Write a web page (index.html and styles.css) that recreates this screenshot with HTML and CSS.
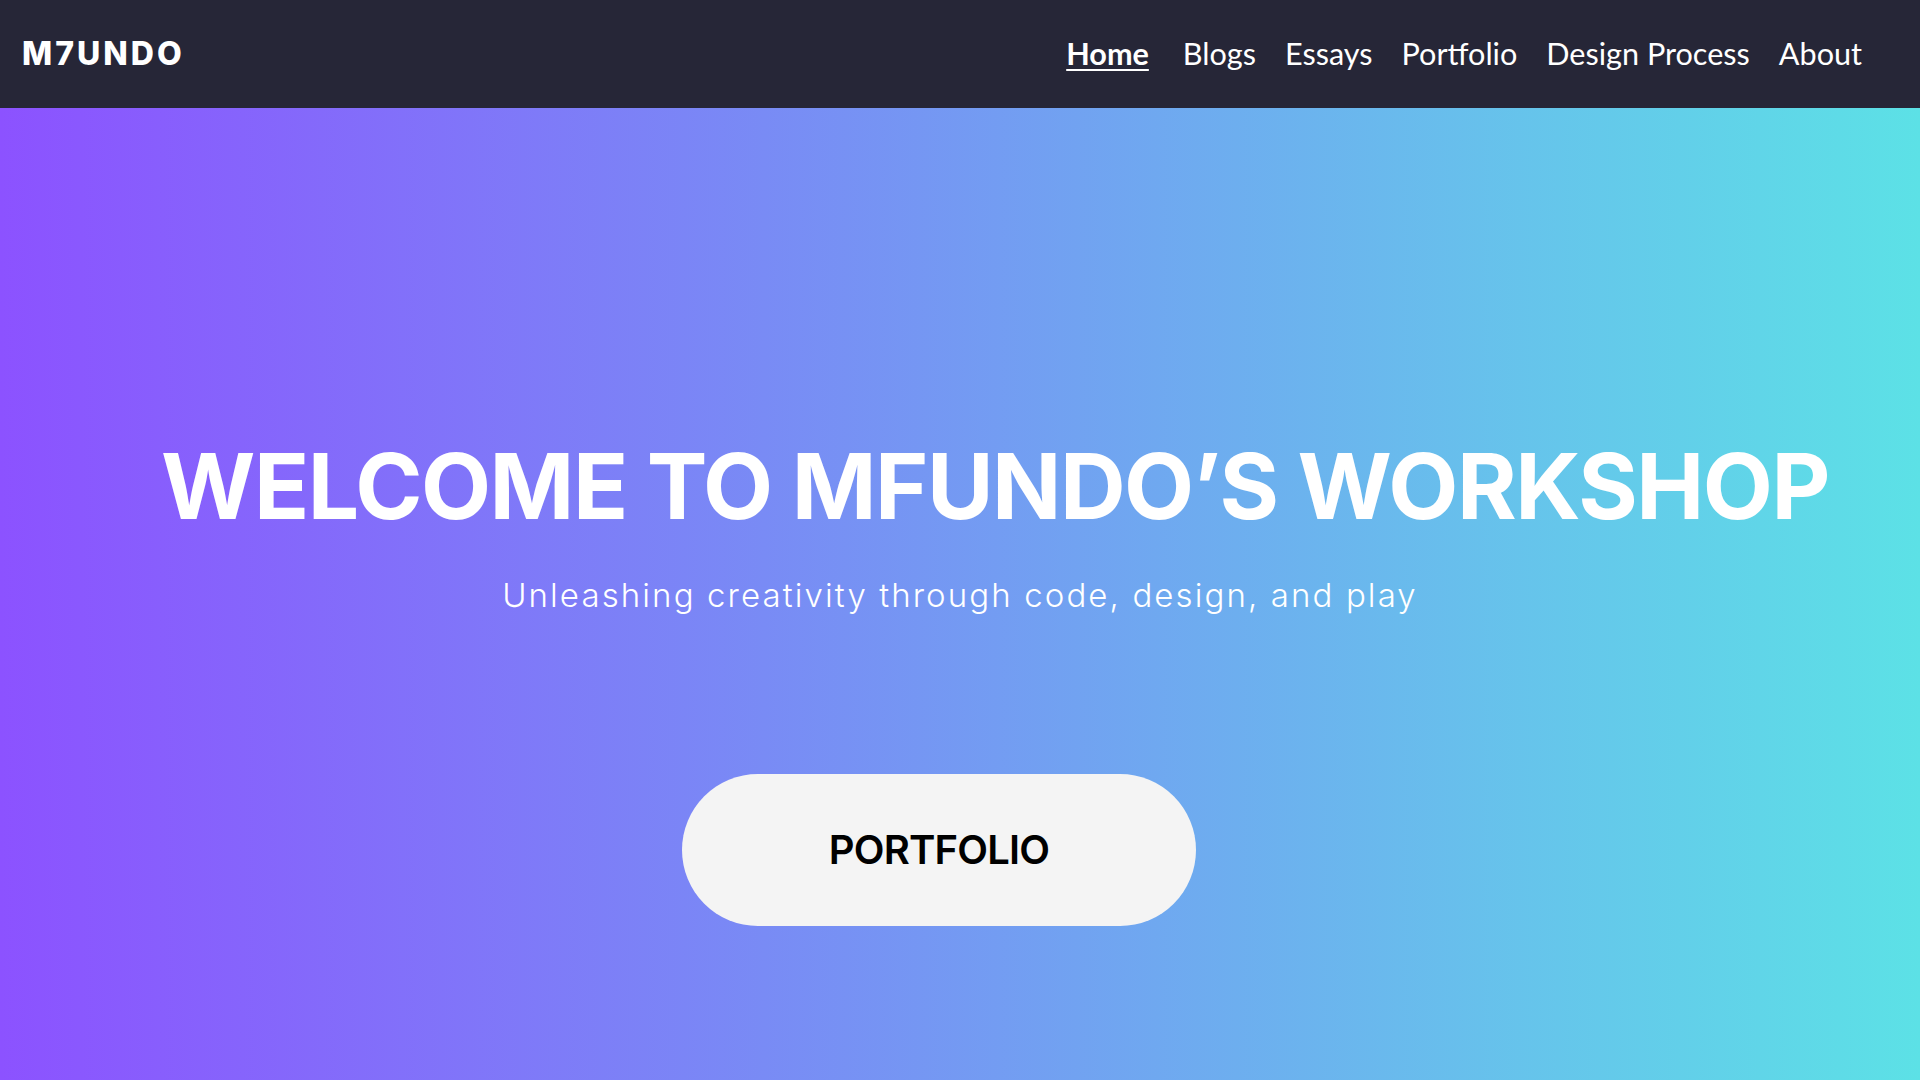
FILE: index.html
```html
<!DOCTYPE html>
<html lang="en">
<head>
<meta charset="utf-8">
<title>M7UNDO</title>
<link rel="stylesheet" href="styles.css">
</head>
<body>
<header class="topbar">
  <a class="logo" href="#">M7UNDO</a>
  <nav class="menu">
    <a class="menu-link active" href="#">Home</a>
    <a class="menu-link" href="#">Blogs</a>
    <a class="menu-link" href="#">Essays</a>
    <a class="menu-link" href="#">Portfolio</a>
    <a class="menu-link" href="#">Design Process</a>
    <a class="menu-link" href="#">About</a>
  </nav>
</header>
<main class="hero">
  <h1 class="hero-title">WELCOME TO MFUNDO’S WORKSHOP</h1>
  <p class="hero-sub">Unleashing creativity through code, design, and play</p>
  <a class="hero-btn" href="#">PORTFOLIO</a>
</main>
</body>
</html>
```
FILE: styles.css
```css
* { box-sizing: border-box; }
html, body { margin: 0; padding: 0; }
body {
  width: 1920px;
  height: 1080px;
  overflow: hidden;
  font-family: Inter, "Liberation Sans", sans-serif;
  display: flex;
  flex-direction: column;
}
a { text-decoration: none; color: inherit; }

.topbar {
  height: 108px;
  flex: 0 0 108px;
  background: #262637;
  display: flex;
  align-items: center;
  justify-content: space-between;
  padding: 0 58px 0 22px;
}
.logo {
  color: #ffffff;
  font-family: Inter, sans-serif;
  font-weight: 800;
  font-size: 32px;
  line-height: 1;
  letter-spacing: 3px;
}
.menu {
  display: flex;
  align-items: center;
  gap: 29px;
}
.menu-link {
  color: #ffffff;
  font-family: Lato, sans-serif;
  font-size: 30.6px;
  line-height: 1;
}
.menu-link.active {
  font-weight: 700;
  margin-right: 5px;
  text-decoration: underline;
  text-decoration-thickness: 2px;
  text-underline-offset: 4px;
}

.hero {
  flex: 1 1 auto;
  background: linear-gradient(to right, #8c52ff 0%, #5ce1e6 100%);
  display: flex;
  flex-direction: column;
  align-items: center;
  padding-top: 333px;
}
.hero-title {
  margin: 0;
  padding-left: 70px;
  color: #ffffff;
  font-family: Inter, sans-serif;
  font-weight: 700;
  font-size: 91px;
  line-height: 1;
  letter-spacing: -1.5px;
  white-space: nowrap;
}
.hero-sub {
  margin: 47px 0 0;
  color: #ffffff;
  font-family: Inter, sans-serif;
  font-weight: 300;
  font-size: 33px;
  line-height: 1;
  letter-spacing: 2.1px;
  white-space: nowrap;
}
.hero-btn {
  margin-top: 162px;
  margin-right: 42px;
  width: 514px;
  height: 152px;
  border-radius: 76px;
  background: #f4f4f4;
  color: #000000;
  display: flex;
  align-items: center;
  justify-content: center;
  font-family: Inter, sans-serif;
  font-weight: 600;
  font-size: 40px;
  line-height: 1;
  letter-spacing: -0.8px;
}
```
